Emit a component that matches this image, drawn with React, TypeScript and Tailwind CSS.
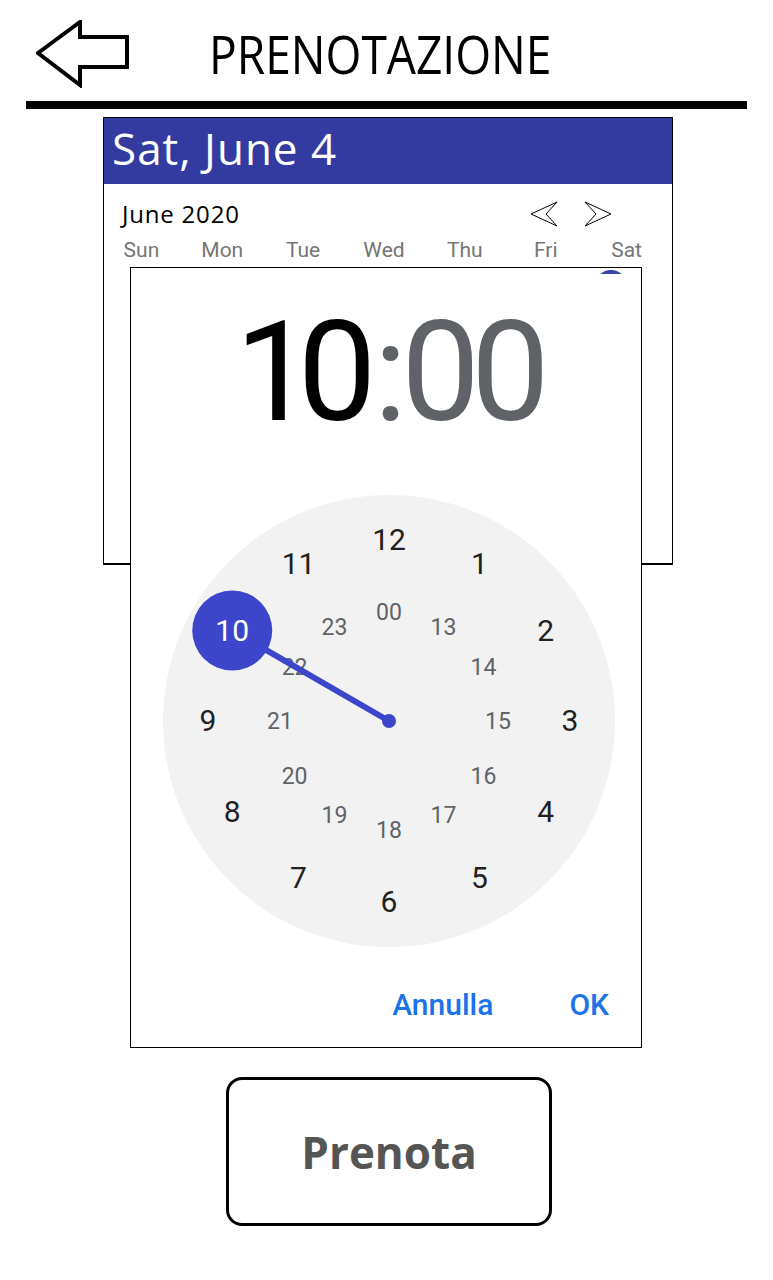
import React from "react";

const SIZE = 452;
const C = SIZE / 2;
const R_OUT = 181;
const R_IN = 109;

function pos(i: number, r: number) {
  const a = (i * 30 * Math.PI) / 180;
  return { left: C + r * Math.sin(a), top: C - r * Math.cos(a) };
}

const outerLabels = ["12", "1", "2", "3", "4", "5", "6", "7", "8", "9", "10", "11"];
const innerLabels = ["00", "13", "14", "15", "16", "17", "18", "19", "20", "21", "22", "23"];

function Clock() {
  const sel = pos(10, R_OUT);
  return (
    <div
      className="relative w-[452px] h-[452px] rounded-full bg-[#f2f2f2] ml-[32px] mt-[53px]"
      style={{ fontFamily: "Roboto, sans-serif" }}
    >
      {outerLabels.map((l, i) =>
        i === 10 ? null : (
          <span
            key={l}
            className="absolute -translate-x-1/2 -translate-y-1/2 text-[30px] leading-[30px] text-[#212121]"
            style={pos(i, R_OUT)}
          >
            {l}
          </span>
        )
      )}
      {innerLabels.map((l, i) => (
        <span
          key={l}
          className="absolute -translate-x-1/2 -translate-y-1/2 text-[23px] leading-[23px] text-[#5f6368]"
          style={pos(i, R_IN)}
        >
          {l}
        </span>
      ))}
      <svg className="absolute left-0 top-0" width={SIZE} height={SIZE}>
        <line x1={C} y1={C} x2={sel.left} y2={sel.top} stroke="#3d46cb" strokeWidth={6} />
        <circle cx={C} cy={C} r={7} fill="#3d46cb" />
        <circle cx={sel.left} cy={sel.top} r={40} fill="#3d46cb" />
      </svg>
      <span
        className="absolute -translate-x-1/2 -translate-y-1/2 text-[30px] leading-[30px] text-white"
        style={sel}
      >
        10
      </span>
    </div>
  );
}

export default function App() {
  return (
    <div className="relative w-[773px] h-[1280px] bg-white overflow-hidden">
      {/* Header */}
      <div className="flex items-start h-[101px]">
        <svg width="94" height="68" viewBox="0 0 94 68" className="shrink-0 ml-[36px] mt-[20px]">
          <polygon
            points="2,33 44,2 44,17 91,17 91,47 44,47 44,65"
            fill="none"
            stroke="#000"
            strokeWidth="4"
            strokeLinejoin="miter"
          />
        </svg>
        <div
          className="ml-[79px] mt-[27px] text-[53px] leading-[53px] font-normal text-black whitespace-nowrap origin-left scale-x-[0.87]"
          style={{ fontFamily: "'Open Sans', sans-serif" }}
        >
          PRENOTAZIONE
        </div>
      </div>
      <div className="mx-[26px] h-[8px] bg-black" />

      {/* Calendar card */}
      <div className="ml-[103px] mt-[8px] w-[570px] h-[448px] border border-black border-b-2 bg-white">
        <div
          className="h-[66px] bg-[#333ba0] text-white text-[44px] leading-[60px] tracking-[1px] pl-[8px]"
          style={{ fontFamily: "'Open Sans', sans-serif" }}
        >
          Sat, June 4
        </div>
        <div className="flex items-center h-[60px] pl-[18px] pr-[60px]">
          <span
            className="text-[24px] tracking-[0.8px] text-black"
            style={{ fontFamily: "'Open Sans', sans-serif" }}
          >
            June 2020
          </span>
          <div className="ml-auto flex gap-[26px]">
            <svg width="28" height="28" viewBox="0 0 28 28">
              <polygon points="1,14 27,2 16,14 27,26" fill="none" stroke="#000" strokeWidth="1" />
            </svg>
            <svg width="28" height="28" viewBox="0 0 28 28">
              <polygon points="27,14 1,2 12,14 1,26" fill="none" stroke="#000" strokeWidth="1" />
            </svg>
          </div>
        </div>
        <div
          className="grid grid-cols-7 w-[566px] -ml-[3px] -mt-[6px] text-[21px] leading-[24px] text-[#757575]"
          style={{ fontFamily: "Roboto, sans-serif" }}
        >
          {["Sun", "Mon", "Tue", "Wed", "Thu", "Fri", "Sat"].map((d) => (
            <span key={d} className="text-center">
              {d}
            </span>
          ))}
        </div>
      </div>

      {/* Time picker dialog (overlay) */}
      <div className="absolute left-[130px] top-[267px] w-[512px] h-[781px] border border-black bg-white flex flex-col">
        {/* edge of the selected day circle from the calendar beneath */}
        <div className="absolute top-0 left-[464px] w-[32px] h-[6px] overflow-hidden">
          <div className="mt-[2px] w-[32px] h-[32px] rounded-full bg-gradient-to-b from-[#2f37a0] to-[#d5d7ee]" />
        </div>
        <div
          className="mt-[34px] pl-[104px] flex text-[140px] leading-[140px] whitespace-nowrap"
          style={{ fontFamily: "Roboto, sans-serif" }}
        >
          <span className="text-black tracking-[-16px]">10</span>
          <span className="text-[#5f6368] ml-[13px] tracking-[-6px]">:</span>
          <span className="text-[#5f6368] tracking-[-9px]">00</span>
        </div>
        <Clock />
        <div
          className="flex justify-end items-center gap-[76px] pr-[32px] mt-[43px] text-[30px] leading-[30px] font-medium text-[#1a73e8]"
          style={{ fontFamily: "Roboto, sans-serif" }}
        >
          <span>Annulla</span>
          <span>OK</span>
        </div>
      </div>

      {/* Prenota button */}
      <div className="ml-[226px] mt-[512px] w-[326px] h-[149px] border-[3px] border-black rounded-[16px] flex items-center justify-center">
        <span
          className="text-[44px] font-bold text-[#555555]"
          style={{ fontFamily: "'Open Sans', sans-serif" }}
        >
          Prenota
        </span>
      </div>
    </div>
  );
}
